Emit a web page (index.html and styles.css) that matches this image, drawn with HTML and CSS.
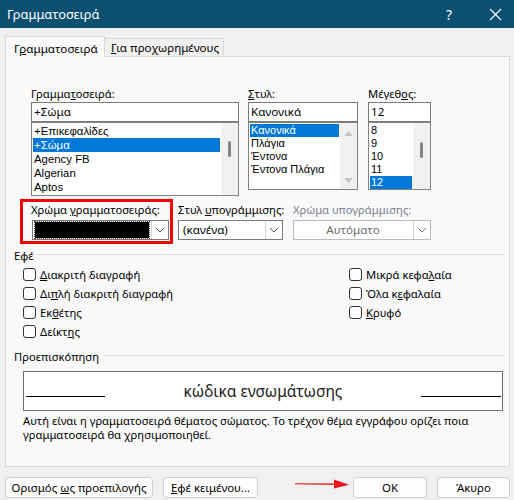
FILE: index.html
```html
<!DOCTYPE html>
<html lang="el">
<head>
<meta charset="utf-8">
<title>Γραμματοσειρά</title>
<link rel="stylesheet" href="styles.css">
</head>
<body>
<header class="titlebar">
  <span class="title">Γραμματοσειρά</span>
  <span class="help">?</span>
  <span class="close"><svg width="13" height="13" viewBox="0 0 13 13"><path d="M1 1L12 12M12 1L1 12" stroke="#fff" stroke-width="1.1" fill="none"/></svg></span>
</header>
<nav class="tabs">
  <div class="tab active">Γ<u>ρ</u>αμματοσειρά</div>
  <div class="tab"><u>Γ</u>ια προχωρημένους</div>
</nav>
<main class="panel">
  <section class="fonts">
    <div class="col col-font">
      <div class="lbl">Γραμμα<u>τ</u>οσειρά:</div>
      <div class="input">+Σώμα</div>
      <div class="list list-font">
        <ul>
          <li>+Επικεφαλίδες</li>
          <li class="sel">+Σώμα</li>
          <li>Agency FB</li>
          <li>Algerian</li>
          <li>Aptos</li>
        </ul>
        <div class="scroll"><span class="thumb thumb-font"></span></div>
      </div>
    </div>
    <div class="col col-style">
      <div class="lbl"><u>Σ</u>τυλ:</div>
      <div class="input">Κανονικά</div>
      <div class="list list-short">
        <ul class="small">
          <li class="sel">Κανονικά</li>
          <li>Πλάγια</li>
          <li>Έντονα</li>
          <li>Έντονα Πλάγια</li>
        </ul>
        <div class="scroll scroll-arrows">
          <svg width="9" height="5" viewBox="0 0 9 5"><path d="M0 5L4.5 0L9 5Z" fill="#c2c2c2"/></svg>
          <svg width="9" height="5" viewBox="0 0 9 5"><path d="M0 0L4.5 5L9 0Z" fill="#c2c2c2"/></svg>
        </div>
      </div>
    </div>
    <div class="col col-size">
      <div class="lbl">Μέγεθ<u>ο</u>ς:</div>
      <div class="input">12</div>
      <div class="list list-short">
        <ul class="small">
          <li>8</li>
          <li>9</li>
          <li>10</li>
          <li>11</li>
          <li class="sel">12</li>
        </ul>
        <div class="scroll"><span class="thumb thumb-size"></span></div>
      </div>
    </div>
  </section>

  <section class="colors">
    <div class="redbox">
      <div class="lbl">Χρώμα <u>γ</u>ραμματοσειράς:</div>
      <div class="dropdown dd-color">
        <div class="focus"><div class="swatch"></div></div>
        <div class="arrow"><svg width="10" height="6" viewBox="0 0 10 6"><path d="M1 1L5 5L9 1" stroke="#555" stroke-width="1" fill="none"/></svg></div>
      </div>
    </div>
    <div class="col col-ul">
      <div class="lbl">Στυλ <u>υ</u>πογράμμισης:</div>
      <div class="dropdown">
        <div class="value">(κανένα)</div>
        <div class="arrow"><svg width="10" height="6" viewBox="0 0 10 6"><path d="M1 1L5 5L9 1" stroke="#555" stroke-width="1" fill="none"/></svg></div>
      </div>
    </div>
    <div class="col col-uc">
      <div class="lbl disabled">Χρώμα υπογράμμισης:</div>
      <div class="dropdown dd-disabled">
        <div class="value center">Αυτόματο</div>
        <div class="arrow"><svg width="10" height="6" viewBox="0 0 10 6"><path d="M1 1L5 5L9 1" stroke="#777" stroke-width="1" fill="none"/></svg></div>
      </div>
    </div>
  </section>

  <div class="group-title">Εφέ</div>
  <section class="effects">
    <div class="chk"><span class="box"></span><span><u>Δ</u>ιακριτή διαγραφή</span></div>
    <div class="chk"><span class="box"></span><span>Μικρά κεφα<u>λ</u>αία</span></div>
    <div class="chk"><span class="box"></span><span>Δι<u>π</u>λή διακριτή διαγραφή</span></div>
    <div class="chk"><span class="box"></span><span>Όλα κ<u>ε</u>φαλαία</span></div>
    <div class="chk"><span class="box"></span><span>Εκ<u>θ</u>έτης</span></div>
    <div class="chk"><span class="box"></span><span><u>Κ</u>ρυφό</span></div>
    <div class="chk"><span class="box"></span><span>Δείκτ<u>η</u>ς</span></div>
  </section>

  <div class="group-title gt-preview">Προεπισκόπηση</div>
  <div class="preview">
    <span class="pline pl-left"></span>
    <span class="ptext">κώδικα ενσωμάτωσης</span>
    <span class="pline pl-right"></span>
  </div>
  <p class="desc">Αυτή είναι η γραμματοσειρά θέματος σώματος. Το τρέχον θέμα εγγράφου ορίζει ποια γραμματοσειρά θα χρησιμοποιηθεί.</p>
</main>
<footer class="buttons">
  <button class="btn b-default">Ορισμός <u>ω</u>ς προεπιλογής</button>
  <button class="btn b-effects"><u>Ε</u>φέ κειμένου...</button>
  <button class="btn b-ok">OK</button>
  <button class="btn b-cancel">Άκυρο</button>
</footer>
<svg class="red-arrow" width="60" height="14" viewBox="0 0 60 14"><path d="M1 6.2L42 6.4L42 7.9L1 7.2Z" fill="#e8141c"/><path d="M40 2.5L55 7.8L40 11.5Z" fill="#e8141c"/></svg>
</body>
</html>
```
FILE: styles.css
```css
* { box-sizing: border-box; margin: 0; padding: 0; }
html, body { width: 514px; height: 500px; overflow: hidden; }
body {
  position: relative;
  background: #f0f0f0;
  font-family: "Noto Sans", "Liberation Sans", sans-serif;
  font-size: 11.2px;
  color: #000;
}
u { text-decoration: underline; text-underline-offset: 1px; text-decoration-thickness: 1px; }

.titlebar {
  height: 28px;
  background: #0b4f71;
  color: #fff;
  display: flex;
  align-items: center;
  padding-left: 7px;
}
.title { flex: 1; font-size: 12.8px; }
.help { width: 20px; text-align: center; font-size: 14px; margin-right: 28px; }
.close { width: 16px; display: flex; justify-content: center; margin-right: 11px; }

.tabs { height: 28px; display: flex; align-items: flex-end; padding-left: 5px; }
.tab {
  height: 18px;
  width: 119px;
  padding: 1px 0 0 6px;
  line-height: 16px;
  background: #f0f0f0;
  border: 1px solid #d9d9d9;
  border-left: 0;
  border-bottom: 0;
  font-size: 11.6px;
}
.tab.active {
  position: relative;
  z-index: 1;
  width: 100px;
  height: 21px;
  margin-bottom: -1px;
  padding: 4px 0 0 8px;
  background: #f9f9f9;
  border-left: 1px solid #d9d9d9;
}

.panel {
  margin: 0 4px 0 5px;
  height: 411px;
  background: #f9f9f9;
  border: 1px solid #d9d9d9;
}

.lbl { height: 16px; line-height: 16px; white-space: nowrap; }
.lbl.disabled { color: #7c7f94; }

.fonts { display: flex; align-items: flex-start; height: 110px; margin: 29px 0 0 25px; }
.col-font { width: 208px; }
.col-style { width: 110px; margin-left: 9px; }
.col-size { width: 63px; margin-left: 10px; }

.input {
  height: 20px;
  border: 1px solid #7a7a7a;
  background: #fff;
  line-height: 18px;
  padding-left: 2px;
  font-size: 11.6px;
}
.list {
  display: flex;
  border: 1px solid #828282;
  background: #fff;
  height: 68px;
}
.list-font { height: 74px; }
.list ul { list-style: none; flex: 1; padding: 1px; min-width: 0; }
.list li {
  height: 14px;
  line-height: 14px;
  padding-left: 1px;
  white-space: nowrap;
  font-family: "Liberation Sans", "Noto Sans", sans-serif;
  font-size: 11.4px;
}
.list ul.small li { height: 13px; line-height: 13px; font-size: 11px; }
.list li.sel { background: #0078d7; color: #fff; }

.scroll { width: 17px; background: #f0f0f0; display: flex; justify-content: center; }
.thumb { width: 3px; height: 16px; background: #858585; border-radius: 1.5px; }
.thumb-font { margin-top: 18px; }
.thumb-size { margin-top: 19px; }
.scroll-arrows { flex-direction: column; align-items: center; justify-content: space-between; padding: 8px 0 6px; }

.colors { display: flex; align-items: flex-start; margin: 3px 0 0 14px; height: 45px; }
.redbox { width: 153px; height: 45px; border: 3px solid #f40000; padding-left: 8px; }
.dropdown {
  display: flex;
  height: 20px;
  margin-top: 2px;
  border: 1px solid #7a7a7a;
  background: #fff;
}
.dd-color { width: 137px; margin-left: 1px; }
.focus { flex: 1; margin: 0 0 0 1px; border: 1px dotted #555; }
.swatch { height: 100%; background: #000; }
.arrow {
  width: 17px;
  margin-left: 1px;
  border-left: 1px solid #d2d2d2;
  display: flex;
  align-items: center;
  justify-content: center;
}
.value { flex: 1; line-height: 18px; padding-left: 4px; font-size: 11.6px; }
.value.center { text-align: center; padding-left: 0; color: #6b6b6b; }
.dd-disabled { border-color: #bcbcbc; }
.col-ul { width: 105px; margin-left: 5px; padding-top: 3px; }
.col-uc { width: 138px; margin-left: 10px; padding-top: 3px; }

.group-title {
  display: flex;
  align-items: center;
  height: 16px;
  line-height: 16px;
  margin: 4px 6px 0 8px;
}
.group-title::after {
  content: "";
  flex: 1;
  border-top: 1px solid #dadada;
  margin: -3px 0 0 5px;
}
.gt-preview { margin-top: 8px; }

.effects {
  display: grid;
  grid-template-columns: 326px auto;
  grid-auto-rows: 19px;
  margin-top: 1px;
  padding-left: 17px;
}
.chk { display: flex; align-items: center; white-space: nowrap; }
.box {
  width: 13px;
  height: 13px;
  border: 1px solid #333;
  border-radius: 3px;
  background: #fff;
  margin-right: 4px;
  flex: none;
}

.preview {
  display: flex;
  align-items: center;
  height: 40px;
  margin: 6px 6px 0 17px;
  border: 1px solid #6d6d6d;
  background: #fff;
}
.pline { height: 1px; background: #000; margin-top: 10px; flex: none; }
.pl-left { width: 79px; margin-left: 2px; }
.pl-right { width: 80px; margin-right: 1px; }
.ptext { flex: 1; text-align: center; font-size: 15.5px; color: #222; }

.desc { margin: 3px 6px 0 17px; line-height: 14px; }

.buttons { display: flex; margin-top: 10px; padding: 0 4px 0 5px; }
.btn {
  height: 21px;
  border: 1px solid #cfcfcf;
  border-radius: 4px;
  background: #fdfdfd;
  font-family: inherit;
  font-size: 11.4px;
  color: #000;
  white-space: nowrap;
}
.b-default { width: 148px; }
.b-effects { width: 95px; margin-left: 10px; }
.b-ok { width: 74px; margin-left: auto; }
.b-cancel { width: 73px; margin-left: 10px; }

.red-arrow { position: absolute; left: 294px; top: 477px; }
```
